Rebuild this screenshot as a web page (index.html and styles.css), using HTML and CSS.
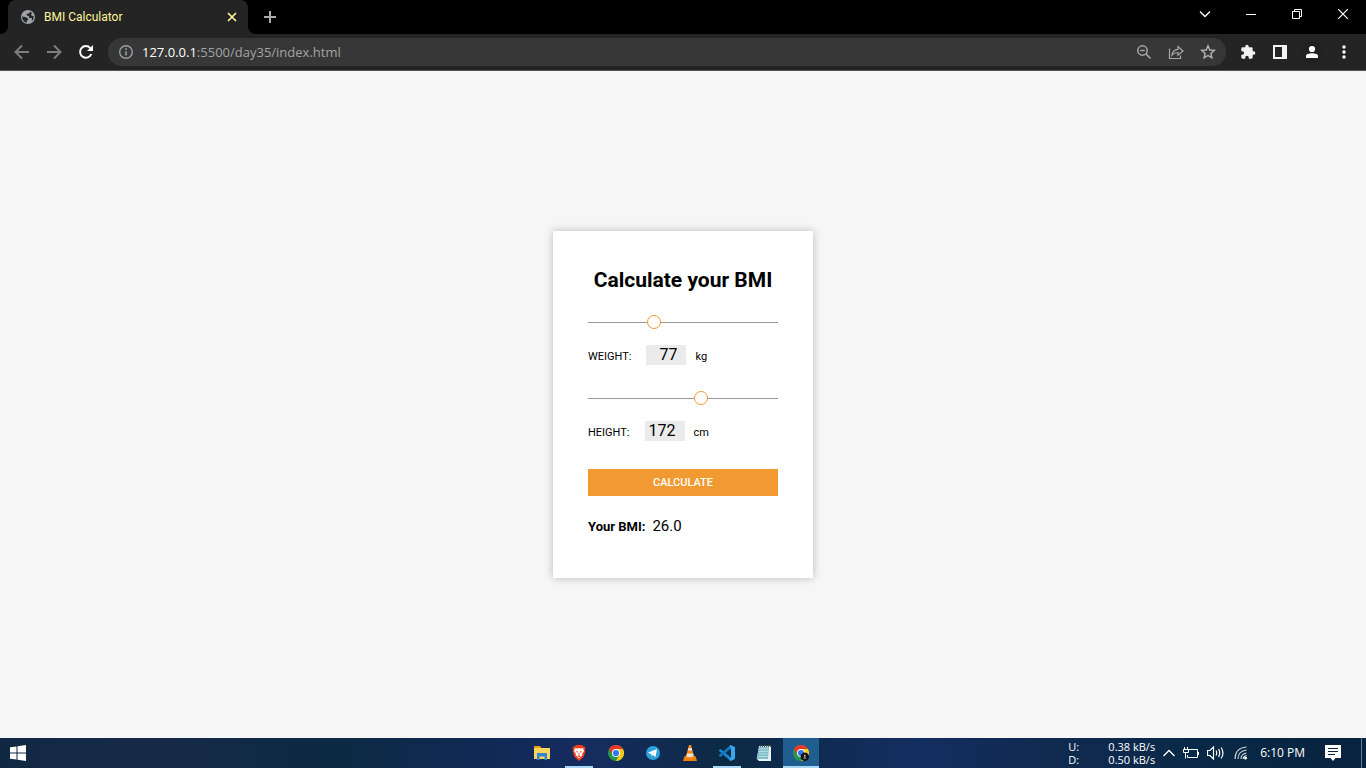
FILE: index.html
```html
<!DOCTYPE html>
<html lang="en">
<head>
<meta charset="utf-8">
<meta name="viewport" content="width=device-width, initial-scale=1">
<title>BMI Calculator</title>
<link rel="stylesheet" href="styles.css">
</head>
<body>
<div class="desktop">
  <header class="browser">
    <div class="tabstrip">
      <div class="tab">
        <svg class="favicon" viewBox="0 0 16 16" width="16" height="16"><circle cx="8" cy="8" r="7" fill="#a0a4a8"/><path d="M2.200 7.500 5.500 8 8.300 9.800 7.600 11.300 6.700 11.800 6.900 13.700A5.800 5.800 0 0 1 2.200 7.500ZM10 2.500 9.500 4.300 7 4.800 6.300 6 8.800 7.200 9.300 8.900 12 9 11.800 12.200A5.700 5.700 0 0 0 13.700 7.300L11.700 6.800 11 5.200 12.300 4.200Z" fill="#242424"/></svg>
        <span class="tab-title">BMI Calculator</span>
        <button class="icon-btn tab-close" aria-label="Close tab"><svg viewBox="0 0 10 10" width="10" height="10"><path d="M1 1 9 9M9 1 1 9" stroke="#fff59b" stroke-width="1.700"/></svg></button>
      </div>
      <button class="icon-btn new-tab" aria-label="New tab"><svg viewBox="0 0 12 12" width="12" height="12"><path d="M6 0V12M0 6H12" stroke="#a8acb1" stroke-width="2"/></svg></button>
      <div class="window-controls">
        <button class="icon-btn win-btn" aria-label="Search tabs"><svg viewBox="0 0 12 8" width="12" height="8"><path d="M1 1.500 6 6.500 11 1.500" fill="none" stroke="#fff" stroke-width="1.300"/></svg></button>
        <button class="icon-btn win-btn" aria-label="Minimize"><svg viewBox="0 0 10 10" width="10" height="10"><path d="M0 5.500H10" stroke="#fff"/></svg></button>
        <button class="icon-btn win-btn" aria-label="Restore"><svg viewBox="0 0 10 10" width="10" height="10"><path d="M.5 2.500H7.500V9.500H.5ZM2.500 2.500V.5H9.500V7.500H7.500" fill="none" stroke="#fff"/></svg></button>
        <button class="icon-btn win-btn" aria-label="Close"><svg viewBox="0 0 10 10" width="10" height="10"><path d="M0 0 10 10M10 0 0 10" stroke="#fff" stroke-width="1.200"/></svg></button>
      </div>
    </div>
    <div class="toolbar">
      <div class="nav-buttons">
        <button class="icon-btn nav-btn" aria-label="Back"><svg viewBox="0 0 16 16" width="16" height="16"><path d="M15 8H2M8 1.500 1.500 8 8 14.500" fill="none" stroke="#7f7f7f" stroke-width="1.900"/></svg></button>
        <button class="icon-btn nav-btn" aria-label="Forward"><svg viewBox="0 0 16 16" width="16" height="16"><path d="M1 8H14M8 1.500 14.500 8 8 14.500" fill="none" stroke="#7f7f7f" stroke-width="1.900"/></svg></button>
        <button class="icon-btn nav-btn" aria-label="Reload"><svg viewBox="0 0 16 16" width="16" height="16"><path d="M13.300 10A5.800 5.800 0 1 1 12.300 4.100" fill="none" stroke="#fff" stroke-width="2"/><path d="M15 1V7H9Z" fill="#fff"/></svg></button>
      </div>
      <div class="omnibox">
        <svg viewBox="0 0 16 16" width="16" height="16"><circle cx="8" cy="8" r="6.300" fill="none" stroke="#9aa0a6" stroke-width="1.400"/><path d="M8 7.200V11.500M8 4.300V6" stroke="#9aa0a6" stroke-width="1.600"/></svg>
        <span class="url"><span class="host">127.0.0.1</span>:5500/day35/index.html</span>
        <button class="icon-btn box-btn" aria-label="Zoom"><svg viewBox="0 0 16 16" width="16" height="16"><circle cx="6.500" cy="6.500" r="4.700" fill="none" stroke="#a9a9a9" stroke-width="1.500"/><path d="M4.300 6.500H8.700M10 10 14.500 14.500" stroke="#a9a9a9" stroke-width="1.500"/></svg></button>
        <button class="icon-btn box-btn" aria-label="Share"><svg viewBox="0 0 16 16" width="16" height="16"><path d="M1.500 4.500V14.500H12.500V11.500M4 11C4.500 7.500 6.500 5.500 10 5.300V2.500L15 7 10 11.300V8.500C7.500 8.500 5.500 9.200 4 11Z" fill="none" stroke="#a9a9a9" stroke-width="1.200"/></svg></button>
        <button class="icon-btn box-btn" aria-label="Bookmark"><svg viewBox="0 0 16 16" width="16" height="16"><path d="M8 1.800 9.800 6 14.300 6.400 10.900 9.400 11.900 13.900 8 11.500 4.100 13.900 5.100 9.400 1.700 6.400 6.200 6Z" fill="none" stroke="#b5b5b5" stroke-width="1.400"/></svg></button>
      </div>
      <div class="toolbar-actions">
        <button class="icon-btn nav-btn" aria-label="Extensions"><svg viewBox="0 0 24 24" width="16" height="16"><path d="M20.500 11H19V7a2 2 0 0 0-2-2h-4V3.500a2.500 2.500 0 0 0-5 0V5H4a2 2 0 0 0-2 2v3.800h1.500a2.700 2.700 0 0 1 0 5.400H2V20c0 1.100.9 2 2 2h3.800v-1.500a2.700 2.700 0 0 1 5.400 0V22H17a2 2 0 0 0 2-2v-4h1.500a2.500 2.500 0 0 0 0-5z" fill="#f1f3f4"/></svg></button>
        <button class="icon-btn nav-btn" aria-label="Side panel"><svg viewBox="0 0 14 14" width="14" height="14"><path d="M1 1H13V13H1Z" fill="none" stroke="#f1f3f4" stroke-width="2"/><path d="M9 1H13V13H9Z" fill="#f1f3f4"/></svg></button>
        <button class="icon-btn nav-btn" aria-label="Profile"><svg viewBox="0 0 22 22" width="22" height="22"><circle cx="11" cy="11" r="11" fill="#202124"/><circle cx="11" cy="8" r="3.100" fill="#fff"/><path d="M5 17V15C5 11.300 17 11.300 17 15V17Z" fill="#fff"/></svg></button>
        <button class="icon-btn nav-btn" aria-label="Menu"><svg viewBox="0 0 4 14" width="4" height="14"><circle cx="2" cy="2" r="1.700" fill="#fff"/><circle cx="2" cy="7" r="1.700" fill="#fff"/><circle cx="2" cy="12" r="1.700" fill="#fff"/></svg></button>
      </div>
    </div>
  </header>

  <main class="page">
    <form class="card">
      <h1 class="card-title">Calculate your BMI</h1>
      <input class="slider" type="range" min="20" max="190" value="77" aria-label="Weight slider">
      <div class="field">
        <label class="caption" for="weight">WEIGHT:</label>
        <input class="number" id="weight" type="number" value="77">
        <span class="caption unit">kg</span>
      </div>
      <input class="slider slider-next" type="range" min="100" max="220" value="172" aria-label="Height slider">
      <div class="field">
        <label class="caption" for="height">HEIGHT:</label>
        <input class="number" id="height" type="number" value="172">
        <span class="caption unit">cm</span>
      </div>
      <button class="calculate" type="button">CALCULATE</button>
      <div class="result"><strong class="result-label">Your BMI:</strong><output class="result-value">26.0</output></div>
    </form>
  </main>

  <footer class="taskbar">
    <div class="start">
      <button class="icon-btn task" aria-label="Start"><svg viewBox="0 0 16 16" width="16" height="16"><path d="M0 2.300 6.500 1.400V7.500H0ZM7.500 1.200 16 0V7.500H7.500ZM0 8.500H6.500V14.600L0 13.700ZM7.500 8.500H16V16L7.500 14.800Z" fill="#fff"/></svg></button>
    </div>
    <nav class="tasks" aria-label="Applications">
      <button class="icon-btn task" aria-label="File Explorer"><svg viewBox="0 0 16 16" width="16" height="16"><path d="M0 1H6L7.500 3H0Z" fill="#e59f13"/><path d="M0 3H16V14H0Z" fill="#ffd45b"/><path d="M3 8H13V15H10.500V11.500H5.500V15H3Z" fill="#3187d2"/></svg></button>
      <button class="icon-btn task open" aria-label="Brave"><svg viewBox="0 0 16 16" width="16" height="16"><path d="M5 0H11L12.500 1.500 14.500 2 14 5 14.500 6 12.500 12 8 16 3.500 12 1.500 6 2 5 1.500 2 3.500 1.500Z" fill="#f33d1b"/><path d="M4 3 6 3.500 8 3 10 3.500 12 3 13 6 11 9 11.500 10 8 13.500 4.500 10 5 9 3 6Z" fill="#fff"/><path d="M5 5.500 7 6.500 6.500 8ZM11 5.500 9 6.500 9.500 8ZM8 7 8.600 9.500 8 10.500 7.400 9.500ZM6 11 8 10.500 10 11 8 12.200Z" fill="#f33d1b"/></svg></button>
      <button class="icon-btn task" aria-label="Chrome"><svg viewBox="0 0 16 16" width="16" height="16"><circle cx="8" cy="8" r="8" fill="#24994a"/><path d="M1.070 4A8 8 0 0 1 14.930 4H8L4.500 9.900Z" fill="#e8392b"/><path d="M8 4H14.930A8 8 0 0 1 8 16L11.500 10Z" fill="#fbc816"/><circle cx="8" cy="8" r="4" fill="#fff"/><circle cx="8" cy="8" r="3.100" fill="#3277ed"/></svg></button>
      <button class="icon-btn task" aria-label="Telegram"><svg viewBox="0 0 16 16" width="16" height="16"><circle cx="8" cy="8" r="7" fill="#2da1dc"/><path d="M2.800 7.800 12 4 10.500 12 7.600 10 6.300 11.300 6 8.900Z" fill="#fff"/><path d="M6 8.900 10.500 5.800 7 9.500 6.300 11.300Z" fill="#bfdcec"/></svg></button>
      <button class="icon-btn task" aria-label="VLC"><svg viewBox="0 0 16 16" width="16" height="16"><path d="M2.500 11H13.500L15 16H1Z" fill="#ed7d0a"/><path d="M7 0H9L12.500 13C11 14.800 5 14.800 3.500 13Z" fill="#f58a16"/><path d="M6.500 3H9.500L10.200 5.500H5.800ZM5 8.500H11L11.600 11C10.500 12.500 5.500 12.500 4.400 11Z" fill="#e6e2dc"/></svg></button>
      <button class="icon-btn task open" aria-label="Visual Studio Code"><svg viewBox="0 0 16 16" width="16" height="16"><path d="M0 5 1.500 4 12 12.500 11.500 16 0 6Z" fill="#1688d4"/><path d="M0 11 1.500 12 12 3.500 11.500 0 0 10Z" fill="#1477bd"/><path d="M11.500 0 16 2V14L11.500 16 10.500 15 12 12V4L10.500 1Z" fill="#35a8f1"/></svg></button>
      <button class="icon-btn task" aria-label="Notepad"><svg viewBox="0 0 16 16" width="16" height="16"><path d="M3 1H15V16H3L1 14Z" fill="#e8f3f5"/><path d="M3 2H13L12 14H.5Z" fill="#82bdc9"/><path d="M3.500 4H12M3.300 6.500H12M3 9H11.500M2.500 11.500H11.500" stroke="#b6dbe2"/><path d="M4.500 0V2M6.500 0V2M8.500 0V2M10.500 0V2M12.500 0V2M14.500 0V2" stroke="#555"/></svg></button>
      <button class="icon-btn task open active" aria-label="Chrome window"><svg viewBox="0 0 16 16" width="16" height="16"><circle cx="8" cy="8" r="8" fill="#24994a"/><path d="M1.070 4A8 8 0 0 1 14.930 4H8L4.500 9.900Z" fill="#e8392b"/><path d="M8 4H14.930A8 8 0 0 1 8 16L11.500 10Z" fill="#fbc816"/><circle cx="8" cy="8" r="4" fill="#fff"/><circle cx="8" cy="8" r="3.100" fill="#3277ed"/><circle cx="11.800" cy="11.800" r="4.200" fill="#141414"/><circle cx="11.800" cy="10.700" r="1" fill="#bbb"/><path d="M10 13.500Q11.800 11 13.600 13.500Z" fill="#bbb"/></svg></button>
    </nav>
    <div class="tray">
      <dl class="netspeed"><dt>U:</dt><dd>0.38 kB/s</dd><dt>D:</dt><dd>0.50 kB/s</dd></dl>
      <button class="icon-btn" aria-label="Show hidden icons"><svg viewBox="0 0 12 8" width="12" height="8"><path d="M.5 7 6 1.500 11.500 7" fill="none" stroke="#fff" stroke-width="1.300"/></svg></button>
      <button class="icon-btn" aria-label="Battery"><svg viewBox="0 0 16 12" width="16" height="12"><path d="M6 2.500H14.500V10.500H4.500V8M15.500 5V8M1.500 0V3M4.500 0V3M0 2.500H6M.5 3V5.500H5.500V3M2.500 6V11.500" fill="none" stroke="#fff"/></svg></button>
      <button class="icon-btn" aria-label="Volume"><svg viewBox="0 0 17 14" width="17" height="14"><path d="M.5 4.500H3L6.500 1V13L3 9.500H.5ZM9 4.500Q10.500 7 9 9.500M11.500 3Q14 7 11.500 11M14 1.500Q18 7 14 12.500" fill="none" stroke="#fff" stroke-width="1.200"/></svg></button>
      <button class="icon-btn wifi" aria-label="Network"><svg viewBox="0 0 14 14" width="14" height="14"><path d="M1 13Q1 2 12.500 1M4 13Q4 5 12.500 4M7 13Q7 8 12.500 7" fill="none" stroke="#c8d0d7" stroke-width="1.200"/><path d="M9 13Q9 10 12.500 9.500" fill="none" stroke="#fff"/><circle cx="11.500" cy="12" r="1.500" fill="#fff"/></svg></button>
      <time class="clock">6:10 PM</time>
      <button class="icon-btn notice" aria-label="Notifications"><svg viewBox="0 0 16 16" width="16" height="16"><path d="M0 0H16V13H10.500L8 16 5.500 13H0Z" fill="#fff"/><path d="M3 3.500H13M3 6.500H13M3 9.500H10" stroke="#0b2540"/></svg></button>
    </div>
  </footer>
</div>
</body>
</html>
```
FILE: styles.css
```css
* { box-sizing: border-box; }

body {
  margin: 0;
  font-family: "Open Sans", "Noto Sans", sans-serif;
}

.desktop {
  display: flex;
  flex-direction: column;
  min-height: 100vh;
}

.icon-btn {
  display: flex;
  align-items: center;
  justify-content: center;
  flex: none;
  padding: 0;
  border: 0;
  background: none;
}

svg { display: block; flex: none; }

/* Browser frame */
.tabstrip {
  display: flex;
  height: 34px;
  padding-left: 8px;
  background: #000;
}

.tab {
  display: flex;
  align-items: center;
  gap: 8px;
  width: 240px;
  padding: 0 11px 0 12px;
  border-radius: 8px 8px 0 0;
  background: #242424;
  position: relative;
}

.tab::before,
.tab::after {
  content: "";
  position: absolute;
  bottom: 0;
  width: 8px;
  height: 8px;
}

.tab::before {
  right: 100%;
  background: radial-gradient(circle at 0 0, #000 8px, #242424 8px);
}

.tab::after {
  left: 100%;
  background: radial-gradient(circle at 100% 0, #000 8px, #242424 8px);
}

.tab-title {
  flex: 1;
  color: #fff59b;
  font-family: Roboto, sans-serif;
  font-size: 12px;
  line-height: 16px;
}

.new-tab { margin-left: 16px; }

.window-controls {
  display: flex;
  margin-left: auto;
}

.win-btn { width: 46px; height: 28px; }

.toolbar {
  display: flex;
  align-items: center;
  height: 37px;
  padding: 0 6px;
  border-bottom: 1px solid #555;
  background: #242424;
}

.nav-buttons,
.toolbar-actions { display: flex; }

.nav-btn { width: 32px; height: 28px; }

.omnibox {
  display: flex;
  flex: 1;
  align-items: center;
  height: 28px;
  margin: 0 6px;
  padding: 0 2px 0 10px;
  border-radius: 14px;
  background: #373737;
}

.url {
  flex: 1;
  margin-left: 8px;
  color: #a3a3a3;
  font-size: 13px;
  line-height: 20px;
}

.host { color: #fff; }

.box-btn { width: 32px; height: 28px; }

/* Calculator */
.page {
  display: flex;
  flex: 1;
  align-items: center;
  justify-content: center;
  background: #f6f6f6;
  font-family: Roboto, "Liberation Sans", sans-serif;
  color: #000;
}

.card {
  display: flex;
  flex-direction: column;
  width: 260px;
  padding: 35px 35px 42px;
  background: #fff;
  box-shadow: 0 0 8px rgba(0, 0, 0, 0.25);
}

.card-title {
  margin: 0 -10px 21px;
  font-size: 21px;
  font-weight: 700;
  line-height: 28px;
  text-align: center;
  white-space: nowrap;
}

.slider {
  appearance: none;
  width: 100%;
  height: 14px;
  margin: 0 0 16px;
  background: linear-gradient(#999, #999) center / 100% 1px no-repeat;
}

.slider::-webkit-slider-thumb {
  appearance: none;
  width: 14px;
  height: 14px;
  border: 1px solid #f09931;
  border-radius: 50%;
  background: #fff;
}

.slider-next { margin-top: 26px; }

.field {
  display: flex;
  align-items: center;
  height: 20px;
}

.caption {
  padding-top: 4px;
  font-size: 11px;
  line-height: 16px;
}

.number {
  appearance: textfield;
  width: 40px;
  height: 20px;
  margin: 0 9px 0 15px;
  padding: 0 9px 0 0;
  border: 0;
  background: #ebebeb;
  color: #000;
  font: 400 16px/20px Roboto, sans-serif;
  text-align: right;
}

.number::-webkit-inner-spin-button { display: none; }

.calculate {
  height: 27px;
  margin: 28px 0 20px;
  padding: 1px 0 0;
  border: 0;
  background: #f09a31;
  color: #fff;
  font: 500 11px/16px Roboto, sans-serif;
}

.result {
  display: flex;
  align-items: baseline;
  gap: 7px;
  height: 20px;
}

.result-label { font-size: 13px; line-height: 20px; }
.result-value { font-size: 15px; font-weight: 400; line-height: 20px; }

/* Taskbar */
.taskbar {
  display: grid;
  grid-template-columns: 1fr auto 1fr;
  height: 30px;
  background: linear-gradient(90deg, #112842, #162a47 12%, #0c2a42 24%, #102956 36%, #162c60 43%, #0c2944 53%, #132e60 67%, #102a50 77%, #082845 90%, #07223e);
  color: #fff;
}

.tasks {
  display: flex;
  gap: 1px;
  padding-right: 23px;
}

.task {
  width: 36px;
  height: 30px;
}

.open { background: linear-gradient(#a9d7f8, #a9d7f8) bottom / 28px 2px no-repeat; }
.active { background: linear-gradient(#a9d7f8, #a9d7f8) bottom / 100% 2px no-repeat #205d91; }

.tray {
  display: flex;
  align-items: center;
  justify-content: flex-end;
  gap: 8px;
  margin-right: 4px;
  padding-right: 20px;
  border-right: 1px solid #66788a;
}

.netspeed {
  display: grid;
  grid-template-columns: 40px auto;
  margin: 0;
  font-size: 11px;
  line-height: 13px;
}

.netspeed dd { margin: 0; }

.wifi { margin-left: 2px; }

.clock {
  margin-left: 4px;
  font-size: 12px;
  line-height: 16px;
}

.notice { margin-left: 12px; }
```
